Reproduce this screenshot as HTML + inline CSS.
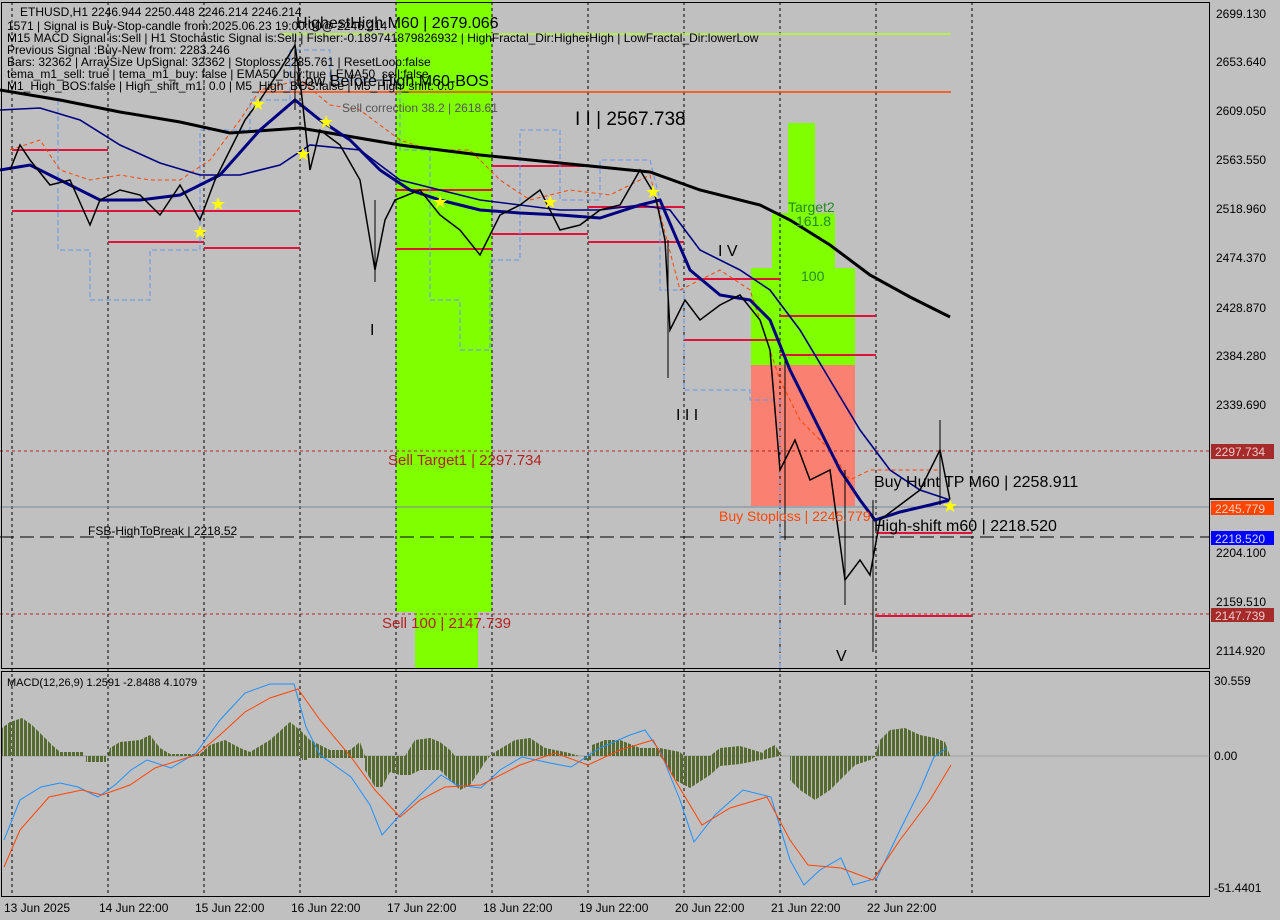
<!DOCTYPE html>
<html><head><meta charset="utf-8"><style>
html,body{margin:0;padding:0;background:#c0c0c0;width:1280px;height:920px;overflow:hidden}
svg{display:block}
text{font-family:"Liberation Sans",sans-serif}
</style></head><body>
<svg width="1280" height="920" viewBox="0 0 1280 920" xmlns="http://www.w3.org/2000/svg">
<defs>
<pattern id="hb" width="4" height="10" patternUnits="userSpaceOnUse"><rect x="0" y="0" width="3" height="10" fill="#556b2f"/></pattern>
</defs>
<rect width="1280" height="920" fill="#c0c0c0"/>
<rect x="396" y="0" width="96" height="612" fill="#7fff00"/>
<rect x="415" y="612" width="63" height="56" fill="#7fff00"/>
<rect x="788" y="123" width="27" height="90" fill="#7fff00"/>
<rect x="772" y="213" width="63" height="55" fill="#7fff00"/>
<rect x="751" y="268" width="104" height="97" fill="#7fff00"/>
<rect x="751" y="365" width="104" height="141" fill="#fa8072"/>
<g stroke="#000" stroke-dasharray="3,3" stroke-width="1">
<line x1="12" y1="2" x2="12" y2="896"/><line x1="108" y1="2" x2="108" y2="896"/><line x1="204" y1="2" x2="204" y2="896"/><line x1="300" y1="2" x2="300" y2="896"/><line x1="396" y1="2" x2="396" y2="896"/><line x1="492" y1="2" x2="492" y2="896"/><line x1="588" y1="2" x2="588" y2="896"/><line x1="684" y1="2" x2="684" y2="896"/><line x1="780" y1="2" x2="780" y2="896"/><line x1="876" y1="2" x2="876" y2="896"/><line x1="972" y1="2" x2="972" y2="896"/>
</g>
<line x1="280" y1="34" x2="951" y2="34" stroke="#adff2f" stroke-width="1.5"/>
<line x1="260" y1="92" x2="951" y2="92" stroke="#ff4500" stroke-width="1.5"/>
<line x1="0" y1="451" x2="1210" y2="451" stroke="#b22222" stroke-dasharray="3,3"/>
<line x1="0" y1="507" x2="1210" y2="507" stroke="#778899"/>
<line x1="0" y1="537" x2="1210" y2="537" stroke="#000" stroke-dasharray="14,6"/>
<line x1="0" y1="614" x2="1210" y2="614" stroke="#b22222" stroke-dasharray="3,3"/>
<g stroke="#dc143c" stroke-width="2">
<line x1="12" y1="150" x2="108" y2="150"/><line x1="12" y1="211" x2="300" y2="211"/><line x1="108" y1="242" x2="204" y2="242"/><line x1="204" y1="248" x2="300" y2="248"/>
<line x1="396" y1="190" x2="492" y2="190"/><line x1="396" y1="249" x2="492" y2="249"/><line x1="492" y1="166" x2="588" y2="166"/><line x1="492" y1="234" x2="588" y2="234"/>
<line x1="588" y1="207" x2="684" y2="207"/><line x1="588" y1="242" x2="684" y2="242"/><line x1="684" y1="279" x2="780" y2="279"/><line x1="684" y1="340" x2="780" y2="340"/>
<line x1="780" y1="316" x2="876" y2="316"/><line x1="780" y1="355" x2="876" y2="355"/><line x1="876" y1="533" x2="972" y2="533"/><line x1="876" y1="616" x2="972" y2="616"/>
</g>
<polyline fill="none" stroke="#6495ed" stroke-dasharray="5,3" points="58,100 58,250 90,250 90,300 150,300 150,250 200,250 200,130 250,130 250,100 290,100 290,50 330,50 330,80 400,80 400,150 430,150 430,300 460,300 460,350 490,350 490,260 520,260 520,130 560,130 560,200 600,200 600,160 650,160 660,200 660,290 684,290 684,390 750,390 750,400 780,400 780,668"/>
<polyline fill="none" stroke="#ff4500" stroke-dasharray="4,3" points="10,150 40,140 60,170 90,180 120,175 150,180 180,180 210,160 240,120 260,90 300,80 330,105 360,110 400,140 430,150 470,150 500,180 530,200 570,190 610,195 650,175 680,290 720,270 750,290 780,380 800,420 830,450 850,480 870,470 900,470 940,470"/>
<polyline fill="none" stroke="#000" stroke-width="3" points="0,90 60,100 120,112 180,122 230,133 300,128 400,145 480,155 580,165 650,172 700,190 760,205 790,220 830,245 870,275 910,297 950,317"/>
<polyline fill="none" stroke="#000080" stroke-width="1.6" points="0,110 40,108 80,120 120,145 160,163 200,175 240,175 280,165 310,145 360,150 400,180 440,190 480,200 520,205 560,210 600,210 640,205 670,210 700,250 740,270 770,290 800,330 830,380 860,430 890,470 920,490 950,500"/>
<polyline fill="none" stroke="#000080" stroke-width="3" points="0,170 30,165 60,180 100,200 140,200 180,195 220,175 260,130 295,100 320,120 350,140 380,170 410,190 440,200 480,210 520,213 560,215 600,218 640,205 660,200 690,270 720,295 750,300 770,320 790,370 810,410 840,470 860,500 875,520 900,512 930,505 950,500"/>
<polyline fill="none" stroke="#000" stroke-width="1.5" points="10,170 20,145 30,160 50,185 70,180 90,225 100,200 120,190 140,195 160,215 180,185 200,220 215,180 230,150 245,120 260,100 280,70 295,45 300,80 310,170 320,130 340,145 360,180 375,270 385,220 395,200 420,190 440,215 460,230 480,255 500,215 520,205 540,190 560,230 580,225 600,210 620,205 640,170 655,195 665,240 670,330 685,300 700,320 720,305 740,295 760,320 770,350 780,470 795,440 810,480 830,470 845,580 860,560 870,575 880,520 900,505 920,490 940,450 950,500"/>
<g stroke="#000"><line x1="375" y1="200" x2="375" y2="282"/><line x1="668" y1="240" x2="668" y2="378"/><line x1="785" y1="360" x2="785" y2="540"/><line x1="845" y1="470" x2="845" y2="605"/><line x1="873" y1="500" x2="873" y2="652"/><line x1="295" y1="40" x2="295" y2="110"/><line x1="940" y1="420" x2="940" y2="505"/></g>
<g font-size="12" fill="#000">
<text x="20" y="16">ETHUSD,H1  2246.944 2250.448 2246.214 2246.214</text>
<text x="7" y="30">1571 | Signal is Buy-Stop-candle from:2025.06.23 19:00:00@ 2246.214</text>
<text x="7" y="42">M15 MACD Signal is:Sell | H1 Stochastic Signal is:Sell | Fisher:-0.189741879826932 | HighFractal_Dir:HigherHigh | LowFractal_Dir:lowerLow</text>
<text x="7" y="54">Previous Signal :Buy-New from: 2283.246</text>
<text x="7" y="66">Bars: 32362 | ArraySize UpSignal: 32362 | Stoploss:2285.761 | ResetLoop:false</text>
<text x="7" y="78">tema_m1_sell: true | tema_m1_buy: false | EMA50_buy:true | EMA50_sell:false</text>
<text x="7" y="90">M1_High_BOS:false | High_shift_m1: 0.0 | M5_High_BOS:false | M5_High_shift: 0.0</text>
</g>
<g font-size="16" fill="#000">
<text x="296" y="28">HighestHigh   M60 | 2679.066</text>
<text x="296" y="86">Low Before High   M60-BOS</text>
<text x="575" y="125" font-size="19">I I | 2567.738</text>
<text x="370" y="335">I</text>
<text x="676" y="420">I I I</text>
<text x="718" y="256">I V</text>
<text x="836" y="661">V</text>
<text x="874" y="487">Buy Hunt TP M60 | 2258.911</text>
<text x="874" y="531">High-shift m60 | 2218.520</text>
</g>
<text x="342" y="112" font-size="12" fill="#555">Sell correction 38.2 | 2618.61</text>
<text x="388" y="465" font-size="15" fill="#b22222">Sell Target1 | 2297.734</text>
<text x="382" y="628" font-size="15" fill="#b22222">Sell 100 | 2147.739</text>
<text x="719" y="521" font-size="14" fill="#ff4500">Buy Stoploss | 2245.779</text>
<text x="88" y="535" font-size="12" fill="#000">FSB-HighToBreak | 2218.52</text>
<text x="788" y="212" font-size="14" fill="#228b22">Target2</text>
<text x="796" y="226" font-size="14" fill="#228b22">161.8</text>
<text x="801" y="281" font-size="14" fill="#228b22">100</text>
<g fill="#ffff00" font-size="18"><text x="250" y="110">★</text><text x="295" y="160">★</text><text x="318" y="128">★</text><text x="192" y="238">★</text><text x="210" y="210">★</text><text x="645" y="198">★</text><text x="942" y="512">★</text><text x="432" y="208">★</text><text x="542" y="208">★</text></g>
<rect x="1.5" y="2.5" width="1208" height="666" fill="none" stroke="#000"/>
<rect x="1.5" y="671.5" width="1208" height="225" fill="none" stroke="#000"/>
<g font-size="12" fill="#000">
<text x="1216" y="18">2699.130</text><text x="1216" y="66">2653.640</text><text x="1216" y="115">2609.050</text><text x="1216" y="164">2563.550</text><text x="1216" y="213">2518.960</text><text x="1216" y="262">2474.370</text><text x="1216" y="312">2428.870</text><text x="1216" y="360">2384.280</text><text x="1216" y="409">2339.690</text><text x="1216" y="557">2204.100</text><text x="1216" y="606">2159.510</text><text x="1216" y="655">2114.920</text>
<text x="1214" y="685">30.559</text><text x="1214" y="760">0.00</text><text x="1214" y="892">-51.4401</text>
</g>
<rect x="1211" y="444" width="63" height="15" fill="#a52a2a"/><text x="1215" y="456" font-size="12" fill="#f0c8c8">2297.734</text>
<line x1="1210" y1="499" x2="1274" y2="499" stroke="#000" stroke-width="2"/>
<rect x="1211" y="501" width="63" height="14" fill="#ff4500"/><text x="1215" y="513" font-size="12" fill="#f0d0c0">2245.779</text>
<rect x="1211" y="531" width="63" height="14" fill="#0000ff"/><text x="1215" y="543" font-size="12" fill="#d0d8ff">2218.520</text>
<rect x="1211" y="608" width="63" height="14" fill="#a52a2a"/><text x="1215" y="620" font-size="12" fill="#f0c8c8">2147.739</text>
<!-- MACD -->
<text x="7" y="686" font-size="11" fill="#000">MACD(12,26,9) 1.2591 -2.8488 4.1079</text>
<line x1="2" y1="756" x2="1210" y2="756" stroke="#808080" stroke-width="0.5"/>
<g fill="url(#hb)">
<polygon points="2,756 2,728 10,722 22,718 32,725 42,735 52,745 60,752 84,752 84,756"/>
<polygon points="86,756 86,762 106,762 106,756"/>
<polygon points="108,756 110,748 120,742 140,740 150,735 160,748 170,754 200,754 210,745 225,740 240,748 250,752 270,740 290,722 300,730 310,740 330,750 350,750 360,742 365,756"/>
<polygon points="300,756 300,758 365,758 365,756"/>
<polygon points="302,756 302,760 308,760 308,756 365,756 365,770 375,787 382,787 390,772 400,775 410,775 420,770 440,770 450,780 460,790 470,785 480,770 485,762 490,756"/>
<polygon points="405,756 415,740 430,738 440,742 450,750 455,756"/>
<polygon points="490,756 495,752 505,746 515,740 530,738 545,748 565,752 580,756"/>
<polygon points="584,756 584,760 592,760 592,756"/>
<polygon points="590,756 592,745 605,740 620,740 640,748 660,748 680,752 684,756"/>
<polygon points="660,756 665,762 675,780 690,788 710,775 720,766 740,764 770,758 780,756"/>
<polygon points="710,756 720,748 740,746 760,752 770,756"/>
<polygon points="790,756 790,780 800,790 815,800 830,790 845,775 855,765 870,760 876,756"/>
<polygon points="875,756 880,740 890,730 905,728 920,735 935,738 945,742 950,756"/>
<polygon points="760,756 765,750 775,745 782,756"/>
</g>
<polyline fill="none" stroke="#1e90ff" stroke-width="1" points="4,840 20,800 41,787 60,783 78,787 98,797 115,785 131,770 147,760 171,768 196,753 220,720 245,693 270,684 294,684 306,727 320,755 351,777 370,805 382,835 400,815 420,795 441,775 457,785 481,788 500,770 522,757 550,763 571,767 600,748 630,735 645,730 661,753 680,800 694,842 715,815 743,790 771,797 790,860 804,885 820,870 841,858 853,885 877,878 900,830 920,790 934,757 947,748"/>
<polyline fill="none" stroke="#ff4500" stroke-width="1" points="4,867 20,830 49,797 82,790 102,795 130,785 155,768 196,755 220,735 245,712 270,698 298,689 320,720 351,757 375,790 400,817 420,800 445,787 481,785 520,765 555,753 588,765 620,750 653,740 675,780 702,825 730,808 767,797 790,840 808,865 841,868 873,880 900,840 930,800 951,765"/>
<g font-size="12" fill="#000">
<text x="4" y="912">13 Jun 2025</text><text x="99" y="912">14 Jun 22:00</text><text x="195" y="912">15 Jun 22:00</text><text x="291" y="912">16 Jun 22:00</text><text x="387" y="912">17 Jun 22:00</text><text x="483" y="912">18 Jun 22:00</text><text x="579" y="912">19 Jun 22:00</text><text x="675" y="912">20 Jun 22:00</text><text x="771" y="912">21 Jun 22:00</text><text x="867" y="912">22 Jun 22:00</text>
</g>
</svg>
</body></html>
